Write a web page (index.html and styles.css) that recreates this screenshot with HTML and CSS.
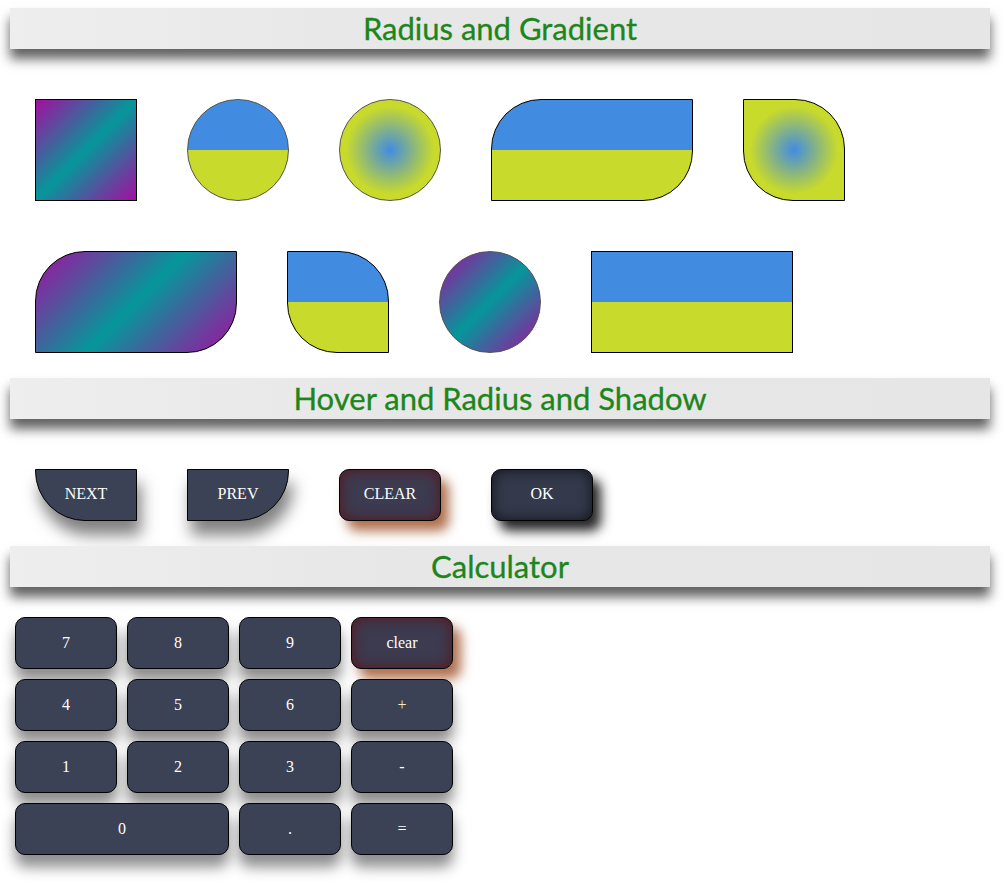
FILE: index.html
```html
<!DOCTYPE html>
<html>
<head>
<meta charset="utf-8">
<title>Radius and Gradient</title>
<link rel="stylesheet" href="styles.css">
</head>
<body>
<header class="bar"><h2 class="bar-title">Radius and Gradient</h2></header>
<section class="shapes">
  <div class="shape sq grad-lin"></div>
  <div class="shape sq circle half"></div>
  <div class="shape sq circle grad-rad"></div>
  <div class="shape wide half tl-br"></div>
  <div class="shape sq grad-rad tr-bl"></div>
  <div class="shape wide grad-lin tl-br"></div>
  <div class="shape sq half tr-bl"></div>
  <div class="shape sq circle grad-lin"></div>
  <div class="shape wide half"></div>
</section>
<header class="bar"><h2 class="bar-title">Hover and Radius and Shadow</h2></header>
<section class="buttons">
  <button class="btn btn-next">NEXT</button>
  <button class="btn btn-prev">PREV</button>
  <button class="btn btn-clear">CLEAR</button>
  <button class="btn btn-ok">OK</button>
</section>
<header class="bar"><h2 class="bar-title">Calculator</h2></header>
<section class="calc">
  <button class="key">7</button>
  <button class="key">8</button>
  <button class="key">9</button>
  <button class="key key-clear">clear</button>
  <button class="key">4</button>
  <button class="key">5</button>
  <button class="key">6</button>
  <button class="key key-plus">+</button>
  <button class="key">1</button>
  <button class="key">2</button>
  <button class="key">3</button>
  <button class="key">-</button>
  <button class="key key-zero">0</button>
  <button class="key">.</button>
  <button class="key">=</button>
</section>
</body>
</html>
```
FILE: styles.css
```css
* { box-sizing: border-box; }
html, body { background: #ffffff; }
body {
  margin: 0;
  padding: 8px 10px 35px 10px;
  width: 1003px;
  font-family: "Liberation Serif", "Times New Roman", serif;
}

.bar {
  width: 980px;
  height: 41px;
  background: linear-gradient(90deg, #eeeeee 0%, #e7e7e7 40%, #e6e6e6 100%);
  box-shadow: 0 10px 11px rgba(0, 0, 0, 0.62);
  display: flex;
  align-items: center;
  justify-content: center;
  position: relative;
  z-index: 1;
}
.bar-title {
  margin: 0;
  font-family: "Lato", "Open Sans", sans-serif;
  font-weight: normal;
  font-size: 31px;
  color: #1c861c;
  line-height: 1;
  -webkit-text-stroke: 0.3px #1c861c;
}

/* shapes */
.shapes {
  width: 980px;
  display: flex;
  flex-wrap: wrap;
  padding: 25px 0 0 0;
}
.shape {
  margin: 25px;
  height: 102px;
  border: 1px solid #000;
}
.sq { width: 102px; }
.wide { width: 202px; }
.circle { border-radius: 50%; border-color: #555; }
.half { background: linear-gradient(#418ce1 50%, #c8da2b 50%); }
.grad-lin { background: linear-gradient(135deg, #a30ea0 0%, #05979a 50%, #a30ea0 100%); }
.grad-rad { background: radial-gradient(#418ce1 0%, #c8da2b 62%); }
.tl-br { border-radius: 50px 0 50px 0; }
.tr-bl { border-radius: 0 50px 0 50px; }

/* buttons */
.buttons {
  display: flex;
  padding: 25px 0 0 0;
}
.btn {
  margin: 25px;
  width: 102px;
  height: 52px;
  border: 1px solid #000;
  background: #3b4255;
  color: #fff;
  font-family: "Liberation Serif", "Times New Roman", serif;
  font-size: 16px;
  padding: 0 0 2px 0;
}
.btn-next {
  border-radius: 0 0 0 50px;
  box-shadow: 4px 14px 16px rgba(0, 0, 0, 0.5);
}
.btn-prev {
  border-radius: 0 0 50px 0;
  box-shadow: 4px 14px 16px rgba(0, 0, 0, 0.5);
}
.btn-clear {
  border-radius: 10px;
  background: #3c3b50;
  box-shadow: inset 0 0 14px #5a1418, 8px 10px 12px rgba(150, 65, 20, 0.75);
}
.btn-ok {
  border-radius: 10px;
  background: #343a4c;
  box-shadow: inset 0 0 14px #111318, 8px 10px 12px rgba(0, 0, 0, 0.85);
}

/* calculator */
.calc {
  display: grid;
  grid-template-columns: repeat(4, 102px);
  grid-auto-rows: 52px;
  gap: 10px;
  padding: 30px 0 0 5px;
}
.key {
  border: 1px solid #000;
  border-radius: 10px;
  background: #3b4255;
  color: #fff;
  font-family: "Liberation Serif", "Times New Roman", serif;
  font-size: 16px;
  padding: 0;
  box-shadow: 0 12px 14px rgba(0, 0, 0, 0.45);
}
.key-zero { grid-column: span 2; }
.key-plus { color: #f8eab8; }
.key-clear {
  background: #3c3b50;
  box-shadow: inset 0 0 14px #5a1418, 8px 10px 12px rgba(150, 65, 20, 0.75);
}
```
